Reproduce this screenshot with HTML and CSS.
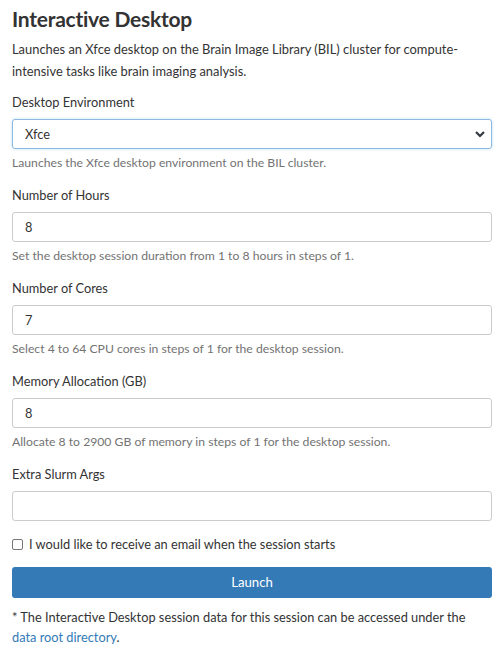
FILE: index.html
```html
<!DOCTYPE html>
<html>
<head>
<meta charset="utf-8">
<link rel="stylesheet" href="styles.css">
</head>
<body>
<div class="page">
  <h1 class="title">Interactive Desktop</h1>
  <p class="desc">Launches an Xfce desktop on the Brain Image Library (BIL) cluster for compute-intensive tasks like brain imaging analysis.</p>

  <div class="group">
    <label class="label">Desktop Environment</label>
    <div class="select focus">
      <span>Xfce</span>
      <svg class="chev" width="12" height="12" viewBox="0 0 12 12"><path d="M2 4 L6 8 L10 4" fill="none" stroke="#343a40" stroke-width="2.2"/></svg>
    </div>
    <div class="help">Launches the Xfce desktop environment on the BIL cluster.</div>
  </div>

  <div class="group">
    <label class="label">Number of Hours</label>
    <div class="input">8</div>
    <div class="help">Set the desktop session duration from 1 to 8 hours in steps of 1.</div>
  </div>

  <div class="group">
    <label class="label">Number of Cores</label>
    <div class="input">7</div>
    <div class="help">Select 4 to 64 CPU cores in steps of 1 for the desktop session.</div>
  </div>

  <div class="group">
    <label class="label">Memory Allocation (GB)</label>
    <div class="input">8</div>
    <div class="help">Allocate 8 to 2900 GB of memory in steps of 1 for the desktop session.</div>
  </div>

  <div class="group last">
    <label class="label">Extra Slurm Args</label>
    <div class="input"></div>
  </div>

  <div class="check">
    <span class="box"></span>
    <span>I would like to receive an email when the session starts</span>
  </div>

  <div class="btn">Launch</div>

  <p class="foot">* The Interactive Desktop session data for this session can be accessed under the <a class="link">data root directory</a>.</p>
</div>
</body>
</html>
```

FILE: styles.css
```css
html, body { margin: 0; padding: 0; background: #fff; }
body {
  font-family: "Lato", "Open Sans", sans-serif;
  font-size: 12.8px;
  line-height: 21px;
  color: #333;
}
.page { padding: 4px 12px 0 12px; }
.title {
  font-size: 21px;
  font-weight: 700;
  letter-spacing: -0.25px;
  line-height: 30px;
  margin: 0 0 4px 0;
  color: #333;
}
.desc { margin: 0 0 10px 0; line-height: 22px; font-size: 12.9px; }
.group { display: flex; flex-direction: column; margin-bottom: 13px; }
.group.last { margin-bottom: 13px; }
.label { line-height: 21px; margin-bottom: 6px; }
.input, .select {
  box-sizing: border-box;
  height: 30px;
  border: 1px solid #ccc;
  border-radius: 3px;
  padding: 0 12px;
  display: flex;
  align-items: center;
  color: #333;
}
.select { justify-content: space-between; padding-right: 5px; }
.select.focus { border-color: #8fb8e0; box-shadow: 0 0 3px rgba(102,175,233,0.45); }
.help {
  font-size: 12.2px;
  line-height: 18px;
  color: #737373;
  margin-top: 5px;
}
.check { display: flex; align-items: center; gap: 6px; line-height: 21px; margin-bottom: 12px; }
.box {
  width: 9px; height: 9px;
  border: 1px solid #767676;
  border-radius: 2px;
  background: #fff;
}
.btn {
  height: 31px;
  background: #337ab7;
  color: #fff;
  font-size: 13.2px;
  border-radius: 3px;
  display: flex; align-items: center; justify-content: center;
  margin-bottom: 9px;
}
.foot { margin: 0; line-height: 20px; }
.link { color: #337ab7; text-decoration: none; }
```
